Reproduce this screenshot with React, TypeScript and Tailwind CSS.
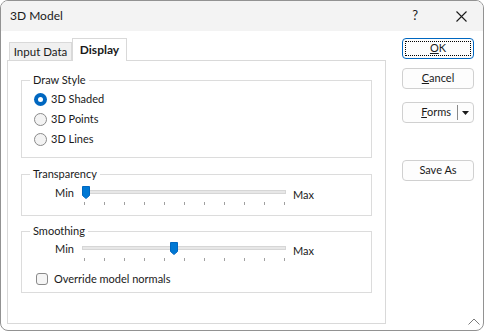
import React from "react";

const font = { fontFamily: 'Lato, "Noto Sans", "Liberation Sans", sans-serif' };

function Radio({ checked, label }: { checked?: boolean; label: string }) {
  return (
    <div className="flex h-[20px] items-center">
      {checked ? (
        <span className="ml-[12px] flex h-[13px] w-[13px] items-center justify-center rounded-full bg-[#0067c0]">
          <span className="h-[5px] w-[5px] rounded-full bg-white" />
        </span>
      ) : (
        <span className="ml-[12px] h-[13px] w-[13px] rounded-full border border-[#8a8a8a] bg-[#f3f3f3]" />
      )}
      <span className="ml-[4px] text-[11px] text-[#1a1a1a]">{label}</span>
    </div>
  );
}

function Slider({ pos }: { pos: number }) {
  const ticks = Array.from({ length: 11 }, (_, i) => i);
  return (
    <div className="flex items-start">
      <span className="ml-[33px] w-[27px] text-[11px] leading-[16px] text-[#1a1a1a]">Min</span>
      <div className="relative h-[22px] w-[204px]">
        {/* track */}
        <div className="absolute left-0 right-0 top-[5px] h-[4px] border border-[#d6d6d6] bg-[#e7e7e7]" />
        {/* thumb */}
        <svg className="absolute top-[1px]" style={{ left: pos }} width="8" height="13" viewBox="0 0 8 13">
          <path d="M0.5 0.5 H7.5 V9.5 L4 12.5 L0.5 9.5 Z" fill="#0078d4" stroke="#0067c0" strokeWidth="1" />
        </svg>
        {/* ticks */}
        {ticks.map((i) => (
          <div key={i} className="absolute top-[17px] h-[3px] w-[1px] bg-[#a0a0a0]" style={{ left: 2 + i * 20 }} />
        ))}
      </div>
      <span className="ml-[7px] mt-[2px] text-[11px] leading-[16px] text-[#1a1a1a]">Max</span>
    </div>
  );
}

function Btn({ children, focused }: { children: React.ReactNode; focused?: boolean }) {
  return (
    <div
      className={
        "flex h-[21px] w-[72px] items-center justify-center rounded-[4px] bg-[#fdfdfd] text-[11px] text-[#1a1a1a] " +
        (focused ? "border-[1.5px] border-[#0067c0]" : "border border-[#d0d0d0]")
      }
    >
      {focused ? (
        <div className="flex h-[15px] w-[66px] items-center justify-center border border-dotted border-black">{children}</div>
      ) : (
        children
      )}
    </div>
  );
}

export default function App() {
  return (
    <div className="h-[331px] w-[484px] overflow-hidden bg-white" style={font}>
      <div className="flex h-[331px] w-[484px] flex-col overflow-hidden rounded-[8px] border border-[#929292] bg-white">
        {/* Title bar */}
        <div className="flex h-[30px] shrink-0 items-center bg-[#f3f3f3]">
          <span className="ml-[9px] text-[12px] text-[#1a1a1a]">3D Model</span>
          <span className="ml-auto mr-[38px] text-[13px] text-[#1a1a1a]">?</span>
          <svg className="mr-[16px]" width="11" height="11" viewBox="0 0 11 11">
            <path d="M0.5 0.5 L10.5 10.5 M10.5 0.5 L0.5 10.5" stroke="#1a1a1a" strokeWidth="1.1" />
          </svg>
        </div>

        <div className="flex flex-1">
          {/* Left: tabs */}
          <div className="ml-[6px] mt-[7px] flex flex-col">
            <div className="flex h-[22px] items-end">
              <div className="ml-[2px] flex h-[18px] w-[63px] items-center justify-center border border-b-0 border-[#d9d9d9] bg-[#f0f0f0] text-[11.5px] text-[#1a1a1a]">
                Input Data
              </div>
              <div className="relative -mb-px flex h-[23px] w-[55px] items-center justify-center border border-b-0 border-[#d9d9d9] bg-white text-[12px] font-bold text-[#1a1a1a]">
                Display
              </div>
            </div>
            <div className="flex h-[264px] w-[379px] flex-col border border-[#d9d9d9] bg-white px-[13px] pt-[11px]">
              <fieldset className="h-[86px] border border-[#dcdcdc] px-0">
                <legend className="ml-[8px] px-[3px] text-[11px] leading-[16px] text-[#1a1a1a]">Draw Style</legend>
                <div className="mt-[1px] flex flex-col">
                  <Radio checked label="3D Shaded" />
                  <Radio label="3D Points" />
                  <Radio label="3D Lines" />
                </div>
              </fieldset>

              <fieldset className="mt-[8px] h-[50px] border border-[#dcdcdc] px-0">
                <legend className="ml-[8px] px-[3px] text-[11px] leading-[16px] text-[#1a1a1a]">Transparency</legend>
                <div className="mt-[3px]">
                  <Slider pos={0} />
                </div>
              </fieldset>

              <fieldset className="mt-[7px] h-[70px] border border-[#dcdcdc] px-0">
                <legend className="ml-[8px] px-[3px] text-[11px] leading-[16px] text-[#1a1a1a]">Smoothing</legend>
                <div className="mt-[2px]">
                  <Slider pos={88} />
                </div>
                <div className="ml-[14px] mt-[8px] flex items-center">
                  <span className="h-[12px] w-[12px] rounded-[3px] border border-[#8a8a8a] bg-[#f5f5f5]" />
                  <span className="ml-[6px] text-[11px] leading-[16px] text-[#1a1a1a]">Override model normals</span>
                </div>
              </fieldset>
            </div>
          </div>

          {/* Right: buttons */}
          <div className="ml-[16px] mt-[7px] flex flex-col">
            <Btn focused>
              <span>
                <u>O</u>K
              </span>
            </Btn>
            <div className="mt-[9px]">
              <Btn>
                <span>
                  <u>C</u>ancel
                </span>
              </Btn>
            </div>
            <div className="mt-[13px] flex h-[21px] w-[72px] items-center rounded-[4px] border border-[#d0d0d0] bg-[#fdfdfd] text-[11px] text-[#1a1a1a]">
              <span className="ml-auto">
                <u>F</u>orms
              </span>
              <span className="ml-[6px] h-[15px] w-[1px] bg-[#8a8a8a]" />
              <svg className="ml-[4px] mr-[4px]" width="7" height="4" viewBox="0 0 7 4">
                <path d="M0 0 H7 L3.5 4 Z" fill="#1a1a1a" />
              </svg>
            </div>
            <div className="mt-[37px]">
              <Btn>Save As</Btn>
            </div>
            <div className="mt-auto mb-[5px] ml-[66px]">
              <svg width="12" height="7" viewBox="0 0 12 7">
                <path d="M0.5 6.5 L6 1 L11.5 6.5" fill="none" stroke="#7a7a7a" strokeWidth="1" />
              </svg>
            </div>
          </div>
        </div>
      </div>
    </div>
  );
}
